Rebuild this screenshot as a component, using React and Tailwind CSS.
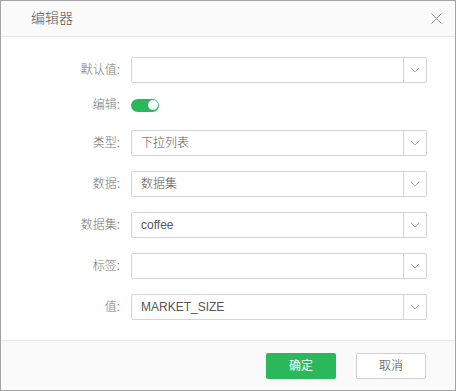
import React, { useState } from "react";

const font = { fontFamily: '"Liberation Sans", "Noto Sans CJK SC", sans-serif' };

const Chevron = () => (
  <svg width="10" height="6" viewBox="0 0 10 6" fill="none">
    <path d="M1 1l4 4 4-4" stroke="#b0b0b0" strokeWidth="1" />
  </svg>
);

const SelectRow = ({ label, value }) => (
  <div className="flex flex-row items-center h-[26px]">
    <div className="w-[120px] pr-[1px] text-right text-[12px] text-[#777777] font-light">{label}:</div>
    <div className="ml-[10px] w-[296px] h-[26px] flex flex-row border border-[#d4d4d4] rounded-[2px] bg-white">
      <div className="flex-1 flex items-center pl-[9px] text-[12px] text-[#555555] font-light">{value}</div>
      <div className="w-[23px] border-l border-[#d4d4d4] flex items-center justify-center">
        <Chevron />
      </div>
    </div>
  </div>
);

export default function App() {
  const [on, setOn] = useState(true);

  return (
    <div style={font} className="w-[456px] h-[391px] bg-white border border-[#a3a3a3] flex flex-col">
      <div className="h-[36px] bg-[#fafafa] border-b border-[#e5e5e5] flex flex-row items-center justify-between pl-[30px] pr-[13px]">
        <div className="text-[14px] text-[#555555] font-light">编辑器</div>
        <svg width="11" height="11" viewBox="0 0 11 11">
          <path d="M0.5 0.5l10 10M10.5 0.5l-10 10" stroke="#8c8c8c" strokeWidth="1" />
        </svg>
      </div>

      <div className="flex-1 flex flex-col pt-[20px]">
        <SelectRow label="默认值" value="" />
        <div className="flex flex-row items-center h-[26px] mt-[9px]">
          <div className="w-[120px] pr-[1px] text-right text-[12px] text-[#777777] font-light">编辑:</div>
          <button
            onClick={() => setOn(!on)}
            className={`ml-[10px] w-[28px] h-[13px] rounded-full flex items-center px-[1.5px] ${
              on ? "bg-[#2bb85b] justify-end" : "bg-[#cccccc] justify-start"
            }`}
          >
            <span className="w-[10px] h-[10px] rounded-full bg-white block" />
          </button>
        </div>
        <div className="flex flex-col gap-[15px] mt-[12px]">
          <SelectRow label="类型" value="下拉列表" />
          <SelectRow label="数据" value="数据集" />
          <SelectRow label="数据集" value="coffee" />
          <SelectRow label="标签" value="" />
          <SelectRow label="值" value="MARKET_SIZE" />
        </div>
      </div>

      <div className="h-[50px] bg-[#fafafa] border-t border-[#e8e8e8] flex flex-row items-center justify-end gap-[20px] pr-[29px]">
        <button className="w-[70px] h-[26px] rounded-[2px] bg-[#2bb85b] text-white text-[12px]">确定</button>
        <button className="w-[70px] h-[26px] rounded-[2px] bg-white border border-[#cfcfcf] text-[#444444] text-[12px] font-light">取消</button>
      </div>
    </div>
  );
}
